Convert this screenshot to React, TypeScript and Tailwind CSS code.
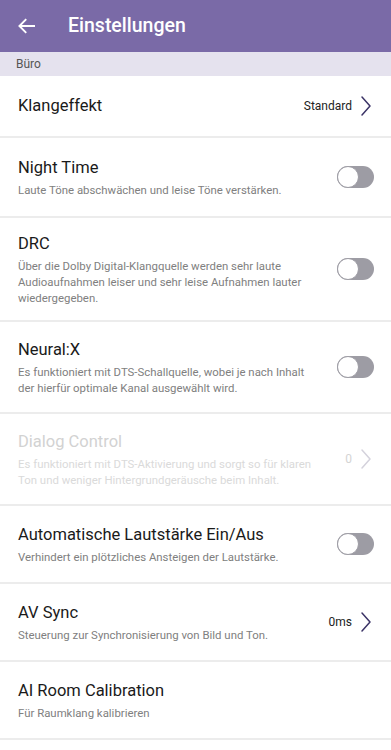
import React from "react";

const font = { fontFamily: "Roboto, 'Noto Sans', sans-serif" };

function Chevron({ light }: { light?: boolean }) {
  return (
    <svg width="12" height="22" viewBox="0 0 12 22" className="ml-[8px]">
      <path d="M2 2 L10 11 L2 20" fill="none" stroke={light ? "#d4d2dc" : "#3b3366"} strokeWidth="1.5" strokeLinecap="round" strokeLinejoin="round" />
    </svg>
  );
}

function Toggle() {
  return (
    <div className="relative w-[37px] h-[22px] rounded-full bg-[#9d9ca4]">
      <div className="absolute left-0 top-0 w-[22px] h-[22px] rounded-full bg-white border border-[#9d9ca4]" />
    </div>
  );
}

type Row = {
  title: string;
  sub?: string[];
  h: string;
  right?: "toggle" | { text: string; light?: boolean };
  disabled?: boolean;
};

const rows: Row[] = [
  { title: "Night Time", sub: ["Laute Töne abschwächen und leise Töne verstärken."], h: "h-[78px]", right: "toggle" },
  {
    title: "DRC",
    sub: [
      "Über die Dolby Digital-Klangquelle werden sehr laute",
      "Audioaufnahmen leiser und sehr leise Aufnahmen lauter",
      "wiedergegeben.",
    ],
    h: "h-[102px]",
    right: "toggle",
  },
  {
    title: "Neural:X",
    sub: ["Es funktioniert mit DTS-Schallquelle, wobei je nach Inhalt", "der hierfür optimale Kanal ausgewählt wird."],
    h: "h-[90px]",
    right: "toggle",
  },
  {
    title: "Dialog Control",
    sub: ["Es funktioniert mit DTS-Aktivierung und sorgt so für klaren", "Ton und weniger Hintergrundgeräusche beim Inhalt."],
    h: "h-[90px]",
    right: { text: "0", light: true },
    disabled: true,
  },
  { title: "Automatische Lautstärke Ein/Aus", sub: ["Verhindert ein plötzliches Ansteigen der Lautstärke."], h: "h-[76px]", right: "toggle" },
  { title: "AV Sync", sub: ["Steuerung zur Synchronisierung von Bild und Ton."], h: "h-[76px]", right: { text: "0ms" } },
  { title: "AI Room Calibration", sub: ["Für Raumklang kalibrieren"], h: "h-[76px]" },
];

export default function App() {
  return (
    <div className="w-[391px] h-[750px] bg-white overflow-hidden" style={font}>
      <div className="h-[52px] bg-[#7a6aa7] flex items-center">
        <svg width="17" height="16" viewBox="0 0 18 16" className="ml-[18px]">
          <path d="M17 8 H2 M8 1.5 L1.5 8 L8 14.5" fill="none" stroke="white" strokeWidth="2" strokeLinecap="square" />
        </svg>
        <div className="ml-[33px] text-white text-[19.5px] font-medium leading-none">Einstellungen</div>
      </div>
      <div className="h-[24px] bg-[#e5e2ee] flex items-center pl-[16px] text-[12px] text-[#555]">Büro</div>
      <div className="h-[60px] flex items-center pl-[18px] pr-[19px] border-b-2 border-[#ececec] box-content">
        <div className="text-[16.5px] text-[#1a1a1a] flex-1">Klangeffekt</div>
        <div className="text-[12px] text-[#222]">Standard</div>
        <Chevron />
      </div>
      {rows.map((r) => (
        <div key={r.title} className={`${r.h} flex items-center pl-[18px] pr-[17px] border-b-2 border-[#ececec] box-content`}>
          <div className="flex-1">
            <div className={`text-[16.5px] leading-[22px] ${r.disabled ? "text-[#d2d2d2]" : "text-[#1a1a1a]"}`}>{r.title}</div>
            {r.sub && (
              <div className={`mt-[3px] text-[11.4px] leading-[16px] ${r.disabled ? "text-[#dadada]" : "text-[#808080]"}`}>
                {r.sub.map((s) => (
                  <div key={s}>{s}</div>
                ))}
              </div>
            )}
          </div>
          {r.right === "toggle" && <Toggle />}
          {r.right && r.right !== "toggle" && (
            <div className="flex items-center mr-[2px]">
              <div className={`text-[12px] ${r.right.light ? "text-[#d4d4d4]" : "text-[#222]"}`}>{r.right.text}</div>
              <Chevron light={r.right.light} />
            </div>
          )}
        </div>
      ))}
    </div>
  );
}
